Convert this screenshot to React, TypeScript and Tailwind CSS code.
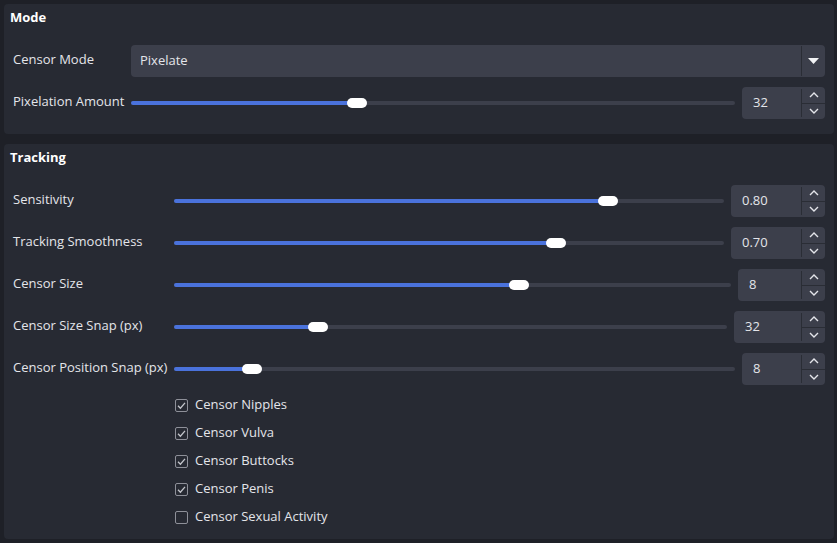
import React from "react";

const font = { fontFamily: '"Open Sans", "Noto Sans", sans-serif' };

function Chevron({ up }: { up?: boolean }) {
  return (
    <svg width="10" height="6" viewBox="0 0 10 6" className="block">
      <path
        d={up ? "M1 5 L5 1 L9 5" : "M1 1 L5 5 L9 1"}
        fill="none"
        stroke="#e4e5ea"
        strokeWidth="1.4"
      />
    </svg>
  );
}

function SpinBox({ value, width }: { value: string; width: number }) {
  return (
    <div
      className="flex h-[32px] shrink-0 rounded-[4px] bg-[#3c3f4b]"
      style={{ width }}
    >
      <div className="flex flex-1 items-center pl-[11px] text-[13px] text-[#e4e5ea]">
        {value}
      </div>
      <div className="w-px bg-[#2a2d35] my-[2px]" />
      <div className="flex w-[23px] flex-col">
        <div className="flex flex-1 items-center justify-center">
          <Chevron up />
        </div>
        <div className="h-px bg-[#2a2d35]" />
        <div className="flex flex-1 items-center justify-center">
          <Chevron />
        </div>
      </div>
    </div>
  );
}

function Slider({ center }: { center: number }) {
  return (
    <div className="relative h-[10px] flex-1 flex items-center">
      <div className="h-[4px] w-full rounded-full bg-[#3c3f4b]" />
      <div
        className="absolute left-0 top-[3px] h-[4px] rounded-full bg-[#4a72dc]"
        style={{ width: center }}
      />
      <div
        className="absolute top-0 h-[10px] w-[20px] rounded-full bg-white"
        style={{ left: center - 10 }}
      />
    </div>
  );
}

function Check({ checked }: { checked: boolean }) {
  return (
    <div className="flex h-[13px] w-[13px] items-center justify-center rounded-[2px] border border-[#8e9099]">
      {checked && (
        <svg width="11" height="11" viewBox="0 0 11 11">
          <path
            d="M2 5.8 L4.4 8.2 L9 2.8"
            fill="none"
            stroke="#c4c6cc"
            strokeWidth="1.3"
          />
        </svg>
      )}
    </div>
  );
}

function TrackRow({
  label,
  center,
  value,
  spinW,
}: {
  label: string;
  center: number;
  value: string;
  spinW: number;
}) {
  return (
    <div className="flex h-[32px] items-center">
      <div className="w-[161px] shrink-0 pb-[2px] text-[13px] text-[#e4e5ea]">{label}</div>
      <Slider center={center} />
      <div className="w-[7px] shrink-0" />
      <SpinBox value={value} width={spinW} />
    </div>
  );
}

export default function App() {
  const checks: [string, boolean][] = [
    ["Censor Nipples", true],
    ["Censor Vulva", true],
    ["Censor Buttocks", true],
    ["Censor Penis", true],
    ["Censor Sexual Activity", false],
  ];
  return (
    <div
      className="h-[543px] w-[837px] overflow-hidden bg-[#1e2027] p-[4px] pr-[3px]"
      style={font}
    >
      <div className="flex h-[130px] flex-col rounded-[4px] bg-[#272a33] pl-[9px] pr-[9px]">
        <div className="-ml-[3px] mt-[4px] h-[19px] text-[13px] font-bold leading-[19px] text-white">
          Mode
        </div>
        <div className="mt-[18px] flex h-[32px] items-center">
          <div className="w-[118px] shrink-0 pb-[2px] text-[13px] text-[#e4e5ea]">Censor Mode</div>
          <div className="flex h-[32px] flex-1 rounded-[4px] bg-[#3c3f4b]">
            <div className="flex flex-1 items-center pl-[9px] text-[13px] text-[#e4e5ea]">
              Pixelate
            </div>
            <div className="w-px bg-[#2a2d35] my-[1px]" />
            <div className="flex w-[23px] items-center justify-center">
              <svg width="11" height="6" viewBox="0 0 11 6">
                <path d="M0 0 L11 0 L5.5 6 Z" fill="#f2f3f5" />
              </svg>
            </div>
          </div>
        </div>
        <div className="mt-[10px] flex h-[32px] items-center">
          <div className="w-[118px] shrink-0 pb-[2px] text-[13px] text-[#e4e5ea]">Pixelation Amount</div>
          <Slider center={226} />
          <div className="w-[7px] shrink-0" />
          <SpinBox value="32" width={83} />
        </div>
      </div>
      <div className="mt-[10px] flex h-[395px] flex-col rounded-[4px] bg-[#272a33] pl-[9px] pr-[9px]">
        <div className="-ml-[3px] mt-[4px] h-[19px] text-[13px] font-bold leading-[19px] text-white">
          Tracking
        </div>
        <div className="mt-[18px] flex flex-col gap-[10px]">
          <TrackRow label="Sensitivity" center={434} value="0.80" spinW={94} />
          <TrackRow label="Tracking Smoothness" center={382} value="0.70" spinW={94} />
          <TrackRow label="Censor Size" center={345} value="8" spinW={87} />
          <TrackRow label="Censor Size Snap (px)" center={144} value="32" spinW={91} />
          <TrackRow label="Censor Position Snap (px)" center={78} value="8" spinW={83} />
        </div>
        <div className="ml-[162px] mt-[6px] flex flex-col">
          {checks.map(([l, c]) => (
            <div key={l} className="flex h-[28px] items-center gap-[7px]">
              <Check checked={c} />
              <span className="text-[13px] text-[#e4e5ea]">{l}</span>
            </div>
          ))}
        </div>
      </div>
    </div>
  );
}
